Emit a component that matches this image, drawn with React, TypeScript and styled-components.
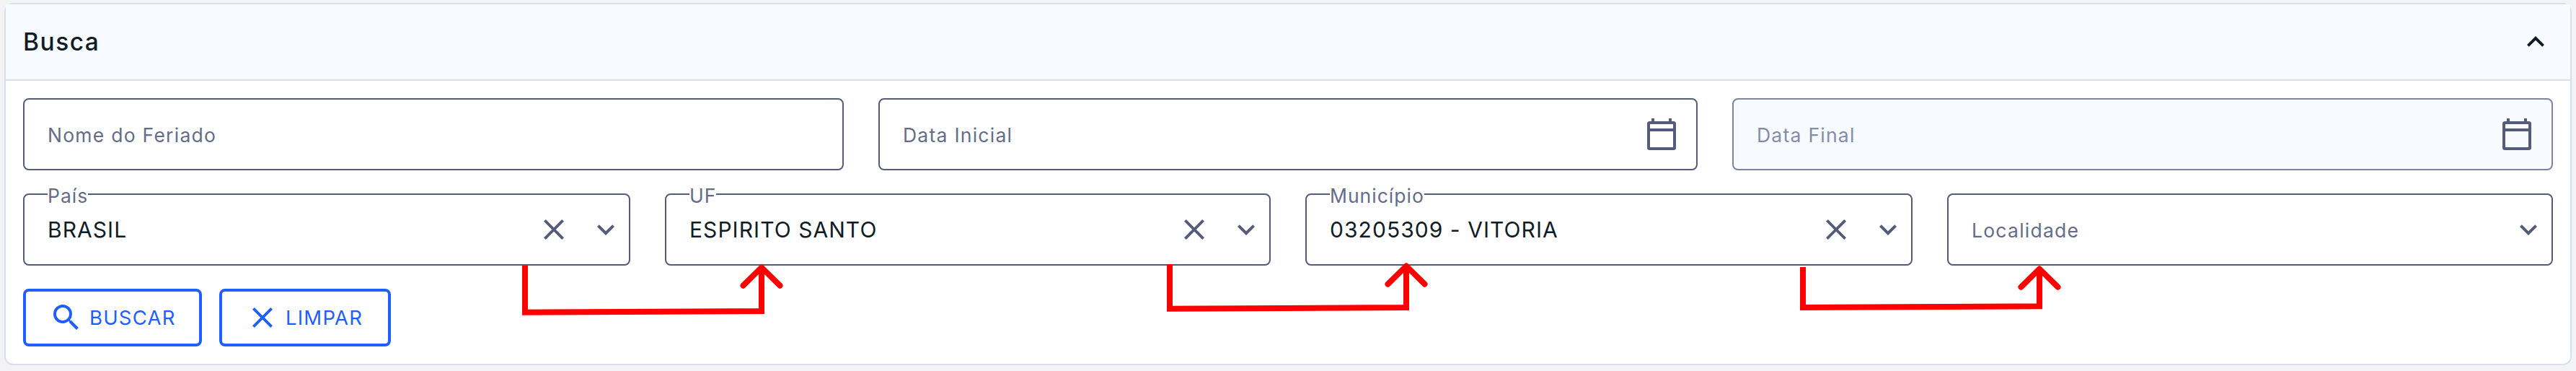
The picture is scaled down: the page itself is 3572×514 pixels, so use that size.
import styled, { createGlobalStyle, css } from 'styled-components';
import { MdClose, MdExpandLess, MdExpandMore, MdSearch } from 'react-icons/md';

const GlobalStyle = createGlobalStyle`
  * {
    box-sizing: border-box;
  }

  body {
    margin: 0;
    background: #f3f3f5;
    font-family: Inter, 'Liberation Sans', sans-serif;
  }
`;

const Page = styled.main`
  height: 514px;
  padding: 4px 6px 8px;
`;

const Card = styled.section`
  position: relative;
  height: 502px;
  border: 2px solid #d9def2;
  border-radius: 12px;
  background: #fff;
`;

const CardHeader = styled.header`
  display: flex;
  align-items: center;
  justify-content: space-between;
  height: 106px;
  padding: 0 24px;
  border-bottom: 2px solid #d9def2;
  background: #f7faff;
  color: #101c26;
`;

const Title = styled.h2`
  margin: 0;
  font-size: 33.5px;
  font-weight: 500;
  line-height: 40px;
  letter-spacing: 1.5px;
`;

const Form = styled.div`
  display: flex;
  flex-direction: column;
  gap: 32px;
  padding: 24px;
`;

const Row = styled.div<{ $columns: string }>`
  display: grid;
  grid-template-columns: ${({ $columns }) => $columns};
  column-gap: 48px;
`;

const FieldBox = styled.div<{ $disabled?: boolean; $inset: number }>`
  position: relative;
  display: flex;
  align-items: center;
  height: 100px;
  padding: 0 ${({ $inset }) => $inset}px 0 32px;
  border: 2px solid #545c79;
  border-radius: 8px;
  color: #545c79;

  ${({ $disabled }) =>
    $disabled &&
    css`
      border-color: #7d84a0;
      background: #f7faff;
    `}
`;

const Placeholder = styled.span<{ $disabled?: boolean }>`
  flex: 1;
  padding-top: 2px;
  color: ${({ $disabled }) => ($disabled ? '#868ba8' : '#656c88')};
  font-size: 26.5px;
  letter-spacing: 1.25px;
`;

const FloatingLabel = styled.label`
  position: absolute;
  top: -15px;
  left: 32px;
  background: #fff;
  color: #656c88;
  font-size: 26.5px;
  line-height: 32px;
  letter-spacing: 1px;
`;

const Value = styled.span`
  flex: 1;
  color: #101c26;
  font-size: 30px;
  letter-spacing: 1.05px;
`;

const Icons = styled.div`
  display: flex;
  align-items: center;
  gap: 24px;
`;

const Actions = styled.div`
  display: flex;
  gap: 24px;
`;

const ActionButton = styled.button<{ $width: number }>`
  display: flex;
  align-items: center;
  gap: 8px;
  width: ${({ $width }) => $width}px;
  height: 80px;
  padding: 0 0 0 32px;
  border: 4px solid #1f5eff;
  border-radius: 8px;
  background: #fff;
  color: #1f5eff;
  font-family: inherit;
  font-size: 27.5px;
  letter-spacing: 1.2px;
`;

const Arrows = styled.svg`
  position: absolute;
  top: -6px;
  left: -8px;
  width: 3572px;
  height: 514px;
  pointer-events: none;
`;

const CalendarIcon = () => (
  <svg width='40' height='44' viewBox='0 0 40 44' fill='none' stroke='currentColor' strokeWidth='4'>
    <rect x='2' y='6' width='36' height='36' rx='1.5' />
    <path d='M2 16h36M8 0v6M32 0v6' />
  </svg>
);

interface ArrowProps {
  x: number;
  top: number;
  bottom: number;
  tip: number;
}

// elbow from the bottom of one select up to the next one
const Arrow = ({ x, top, bottom, tip }: ArrowProps) => {
  const end = x + 328;

  return (
    <>
      <path d={`M${x} ${top}V${bottom}L${end} ${bottom - 1.7}V${tip}`} />
      <path
        d={`M${end - 25.5} ${tip + 25.7}L${end} ${tip + 0.5}L${end + 25.5} ${tip + 25.7}`}
        strokeLinecap='round'
        strokeLinejoin='round'
      />
    </>
  );
};

interface SelectProps {
  label: string;
  value?: string;
}

const SelectField = ({ label, value }: SelectProps) => (
  <FieldBox $inset={8}>
    {value ? (
      <>
        <FloatingLabel>{label}</FloatingLabel>
        <Value>{value}</Value>
      </>
    ) : (
      <Placeholder>{label}</Placeholder>
    )}
    <Icons>
      {value ? <MdClose size={48} /> : null}
      <MdExpandMore size={48} />
    </Icons>
  </FieldBox>
);

const App = () => {
  return (
    <>
      <GlobalStyle />
      <Page>
        <Card>
          <CardHeader>
            <Title>Busca</Title>
            <MdExpandLess size={48} />
          </CardHeader>
          <Form>
            <Row $columns='1138fr 1136fr 1138fr'>
              <FieldBox $inset={28}>
                <Placeholder>Nome do Feriado</Placeholder>
              </FieldBox>
              <FieldBox $inset={28}>
                <Placeholder>Data Inicial</Placeholder>
                <CalendarIcon />
              </FieldBox>
              <FieldBox $inset={28} $disabled>
                <Placeholder $disabled>Data Final</Placeholder>
                <CalendarIcon />
              </FieldBox>
            </Row>
            <Row $columns='842fr 840fr 842fr 840fr'>
              <SelectField label='País' value='BRASIL' />
              <SelectField label='UF' value='ESPIRITO SANTO' />
              <SelectField label='Município' value='03205309 - VITORIA' />
              <SelectField label='Localidade' />
            </Row>
            <Actions>
              <ActionButton $width={248}>
                <MdSearch size={48} />
                BUSCAR
              </ActionButton>
              <ActionButton $width={238}>
                <MdClose size={48} />
                LIMPAR
              </ActionButton>
            </Actions>
          </Form>
          <Arrows viewBox='0 0 3572 514' fill='none' stroke='#f00' strokeWidth='8'>
            <Arrow x={728} top={368} bottom={432.7} tip={370} />
            <Arrow x={1622} top={366} bottom={427.7} tip={368} />
            <Arrow x={2500} top={370} bottom={426} tip={372} />
          </Arrows>
        </Card>
      </Page>
    </>
  );
};

export default App;
